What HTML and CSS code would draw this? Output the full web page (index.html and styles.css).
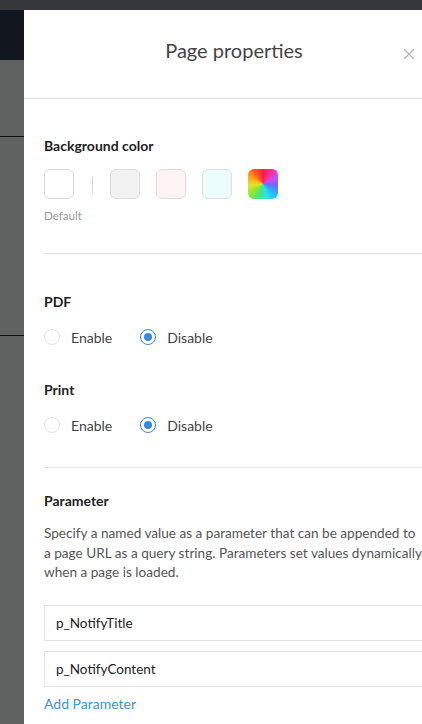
FILE: index.html
```html
<!DOCTYPE html>
<html>
<head>
<meta charset="utf-8">
<link rel="stylesheet" href="styles.css">
</head>
<body>
<div class="topbar"></div>
<div class="main">
  <div class="backdrop">
    <div class="bd-dark"></div>
    <div class="bd-gray">
      <div class="bd-line l1"></div>
      <div class="bd-line l2"></div>
    </div>
  </div>
  <div class="panel">
    <div class="header">
      <h1 class="title">Page properties</h1>
      <svg class="close" width="12" height="12" viewBox="0 0 12 12"><path d="M1 1L11 11M11 1L1 11" stroke="#b4b4b4" stroke-width="1.2" fill="none"/></svg>
    </div>
    <div class="section bg-sec">
      <div class="label">Background color</div>
      <div class="swatches">
        <div class="sw-col">
          <div class="swatch white"></div>
          <div class="sw-caption">Default</div>
        </div>
        <div class="sep"></div>
        <div class="swatch grey"></div>
        <div class="swatch pink"></div>
        <div class="swatch cyan"></div>
        <div class="swatch rainbow"></div>
      </div>
    </div>
    <div class="section radios-sec">
      <div class="label">PDF</div>
      <div class="radio-row">
        <span class="radio"></span><span class="rtext">Enable</span>
        <span class="radio on"></span><span class="rtext">Disable</span>
      </div>
      <div class="label print">Print</div>
      <div class="radio-row">
        <span class="radio"></span><span class="rtext">Enable</span>
        <span class="radio on"></span><span class="rtext">Disable</span>
      </div>
    </div>
    <div class="section param">
      <div class="label">Parameter</div>
      <p class="desc">Specify a named value as a parameter that can be appended to a page URL as a query string. Parameters set values dynamically when a page is loaded.</p>
      <div class="input">p_NotifyTitle</div>
      <div class="input">p_NotifyContent</div>
      <div class="add">Add Parameter</div>
    </div>
  </div>
</div>
</body>
</html>
```
FILE: styles.css
```css
* { box-sizing: border-box; }
html, body { margin: 0; padding: 0; }
body {
  width: 422px;
  height: 724px;
  overflow: hidden;
  font-family: Lato, "Open Sans", sans-serif;
  background: #fff;
}
.topbar { height: 10px; background: #35373b; }
.main { display: flex; height: 714px; }
.backdrop { width: 24px; flex: none; display: flex; flex-direction: column; }
.bd-dark { height: 50px; background: #12161e; }
.bd-gray { flex: 1; background: #606161; }
.bd-line { height: 1px; background: #111; }
.l1 { margin-top: 76px; }
.l2 { margin-top: 198px; }
.panel { width: 420px; flex: none; background: #fff; }
.header {
  height: 89px;
  border-bottom: 1px solid #e3e3e3;
  display: flex;
  align-items: center;
  justify-content: center;
  position: relative;
}
.title {
  margin: 0 0 8px 0;
  font-size: 20px;
  font-weight: 400;
  color: #444;
}
.close { position: absolute; left: 379px; top: 38px; }
.section { margin: 0 20px; border-bottom: 1px solid #e3e3e3; }
.label { font-size: 14px; font-weight: 700; color: #222; line-height: 16px; }
.bg-sec { padding-top: 39px; padding-bottom: 31px; }
.swatches { display: flex; align-items: flex-start; margin-top: 15px; }
.sw-col { display: flex; flex-direction: column; width: 30px; }
.swatch { width: 30px; height: 30px; border-radius: 6px; border: 1px solid #dcdcdc; margin-right: 16px; flex: none; }
.sw-col .swatch { margin-right: 0; }
.sw-caption { font-size: 11.6px; color: #999; margin-top: 10px; white-space: nowrap; }
.sep { width: 1px; height: 18px; background: #d8d8d8; margin: 8px 17px 0 18px; flex: none; }
.white { background: #fff; }
.grey { background: #f2f2f2; }
.pink { background: #fff3f3; }
.cyan { background: #ecfdfd; }
.rainbow {
  border: none;
  background: conic-gradient(from 0deg, #ff1a4a, #ff2c98, #c64cff, #6b6bff, #24b8ff, #2ee6e6, #40e87a, #8fe33a, #d8e82a, #ffb020, #ff5a1a, #ff1a4a);
}
.radios-sec { padding-top: 40px; padding-bottom: 34px; }
.radio-row { display: flex; align-items: center; margin-top: 19px; height: 16px; }
.radio {
  width: 16px; height: 16px; border-radius: 50%;
  border: 1px solid #dde2e8; background: #fff;
  flex: none; position: relative;
}
.radio.on { border-color: #3b87d9; }
.radio.on::after {
  content: ""; position: absolute; left: 3px; top: 3px;
  width: 8px; height: 8px; border-radius: 50%; background: #3b87d9;
}
.rtext { font-size: 14px; color: #444; margin-left: 11px; margin-right: 28px; }
.print { margin-top: 37px; }
.param { border-bottom: none; padding-top: 25px; }
.desc { margin: 15px 0 22px 0; font-size: 13.6px; line-height: 19.5px; color: #555; }
.input {
  height: 36px; border: 1px solid #e1e1e1; padding-left: 11px;
  display: flex; align-items: center; font-size: 13.5px; color: #222;
  margin-bottom: 10px;
}
.add { font-size: 14px; color: #3b8fe4; margin-top: -2px; }
```
